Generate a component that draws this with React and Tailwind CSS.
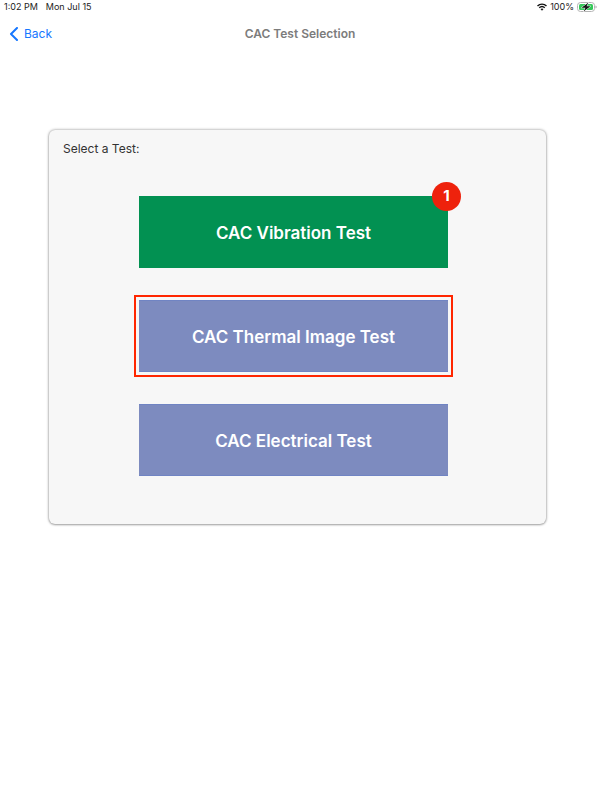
import React, { useState } from 'react';

const tests = [
  { id: 'vibration', label: 'CAC Vibration Test', done: true, badge: 1 },
  { id: 'thermal', label: 'CAC Thermal Image Test' },
  { id: 'electrical', label: 'CAC Electrical Test' },
];

const WifiIcon = () => (
  <svg className="w-[10px] h-2" viewBox="0 0 20 15" fill="none" stroke="#111" strokeWidth="2.8" aria-hidden="true">
    <path d="M1 5.4C6 .4 14 .4 19 5.4" />
    <path d="M4.5 9.1c3.2-3 7.800-3 11 0" />
    <path d="M10 14.8 7 11.700c1.800-1.500 4.200-1.500 6 0z" fill="#111" stroke="none" />
  </svg>
);

const BatteryIcon = () => (
  <svg className="w-5 h-[10px]" viewBox="0 0 40 20" aria-hidden="true">
    <rect x="1" y="1" width="34" height="18" rx="6" fill="#fff" stroke="#b4b4b4" strokeWidth="2" />
    <rect x="4" y="4" width="28" height="12" rx="3" fill="#35c759" />
    <path d="M37 7c3 1 3 5 0 6z" fill="#a8a8a8" />
    <path d="M23 1 9 11.500h8L13 19 27 8.500h-8z" fill="#111" stroke="#fff" strokeWidth="2" paintOrder="stroke" />
  </svg>
);

const StatusBar = () => (
  <div className="flex items-center justify-between h-[14px] pl-1 pr-[3px] text-[9px] leading-[14px] text-[#1c1c1c]">
    <div className="flex gap-2">
      <span>1:02 PM</span>
      <span>Mon Jul 15</span>
    </div>
    <div className="flex items-center gap-[3px]">
      <WifiIcon />
      <span>100%</span>
      <BatteryIcon />
    </div>
  </div>
);

const NavBar = () => (
  <header className="grid grid-cols-3 items-center h-10 px-[9px]">
    <button type="button" className="flex items-center gap-[5px] justify-self-start text-xs text-[#1677ff]">
      <svg className="w-[10px] h-[14px]" viewBox="0 0 10 14" fill="none" stroke="currentColor" strokeWidth="2" strokeLinecap="round" strokeLinejoin="round" aria-hidden="true">
        <path d="M8 1 2 7l6 6" />
      </svg>
      Back
    </button>
    <h1 className="justify-self-center whitespace-nowrap text-xs font-semibold text-[#7c7c7c]">CAC Test Selection</h1>
  </header>
);

const TestButton = ({ test, selected, onSelect }) => (
  <div className="relative">
    <button
      type="button"
      onClick={() => onSelect(test.id)}
      className={`block w-full h-[72px] pt-[3px] text-[17px] font-semibold text-white ${
        test.done ? 'bg-[#029152]' : 'bg-[#7d8bbf] border-y border-[#7084c3]'
      } ${selected ? 'outline-2 outline-offset-3 outline-[#ff2600]' : ''}`}
    >
      {test.label}
    </button>
    {test.badge && (
      <span className="absolute -top-[14px] -right-[13px] flex items-center justify-center size-[29px] rounded-full bg-[#ee220c] text-[15px] font-bold text-white">
        {test.badge}
      </span>
    )}
  </div>
);

export default function App() {
  const [selected, setSelected] = useState('thermal');

  return (
    <div className="min-h-screen bg-white font-['Inter',sans-serif]">
      <StatusBar />
      <NavBar />
      <main className="pt-[76px] pl-[49px] pr-[54px]">
        <section className="rounded-md bg-[#f7f7f7] pt-[10px] pb-12 shadow-[0_0_3px_rgba(0,0,0,0.45),0_1px_2px_rgba(0,0,0,0.2)]">
          <h2 className="px-[14px] text-xs leading-[18px] text-[#333]">Select a Test:</h2>
          {/* Available tests */}
          <div className="flex flex-col gap-8 mt-[38px] pl-[90px] pr-[98px]">
            {tests.map((test) => (
              <TestButton
                key={test.id}
                test={test}
                selected={selected === test.id}
                onSelect={setSelected}
              />
            ))}
          </div>
        </section>
      </main>
    </div>
  );
}
